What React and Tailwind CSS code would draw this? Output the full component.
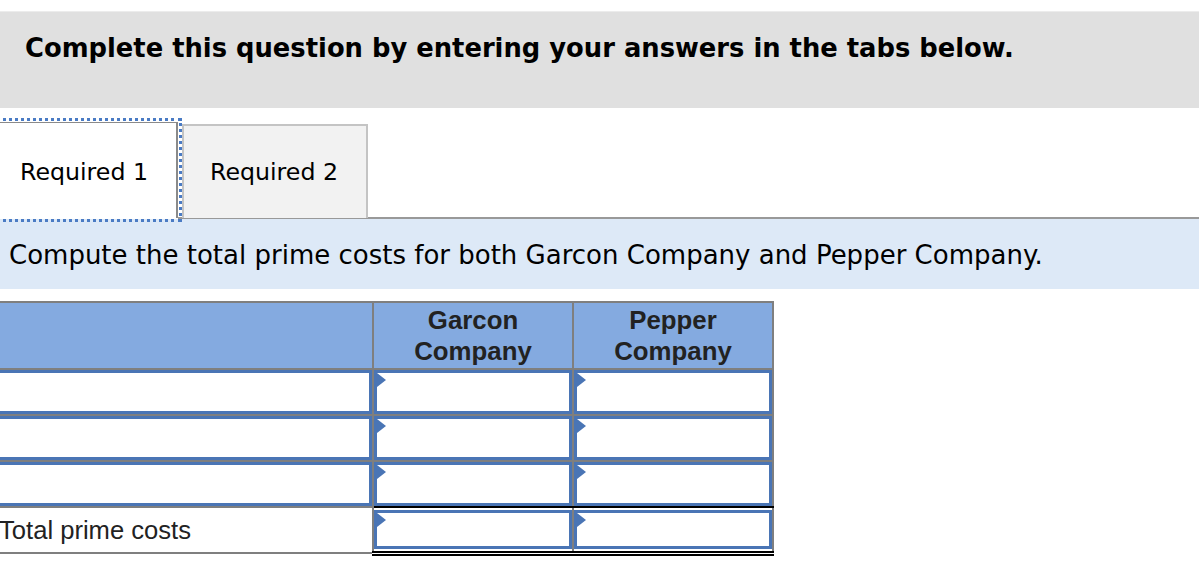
import React from "react";

const verdana = { fontFamily: '"DejaVu Sans", Verdana, sans-serif' };
const arial = { fontFamily: '"Liberation Sans", Arial, sans-serif' };

function Flag() {
  return (
    <span className="absolute left-0 top-0 h-0 w-0 border-y-[7px] border-l-[9px] border-y-transparent border-l-[#4a75b5]" />
  );
}

function InputCell({ flag = true, h = "h-[44px]" }) {
  return (
    <div className={`relative ${h} border-[3px] border-[#4a75b5] bg-white`}>
      {flag && <Flag />}
    </div>
  );
}

export default function App() {
  return (
    <div className="h-[568px] w-[1199px] overflow-hidden bg-white">
      <div className="mt-[11px] h-[97px] border-t border-[#ececec] bg-[#e0e0e0] pl-[25px] pt-[17px]">
        <div className="whitespace-nowrap text-[25.8px] font-bold text-black" style={verdana}>
          Complete this question by entering your answers in the tabs below.
        </div>
      </div>

      <div className="mt-[14px] flex h-[96px] items-end">
        <div
          className="relative flex h-[96px] w-[178px] items-center whitespace-nowrap border-r-2 border-t border-[#8a8a8a] bg-white pl-[20px] pt-[4px] text-[23.7px] text-black outline-dotted outline-[3px] outline-offset-[1px] outline-[#4a7bc4]"
          style={verdana}
        >
          Required 1
        </div>
        <div
          className="ml-[4px] flex h-[94px] w-[186px] items-center whitespace-nowrap border-2 border-b-0 border-[#c4c4c4] bg-[#f2f2f2] pl-[26px] pt-[2px] text-[23.7px] text-black"
          style={verdana}
        >
          Required 2
        </div>
        <div className="flex-1 self-end" />
      </div>

      <div className="-mt-[1px] ml-[178px] h-[2px] bg-[#999999]" />

      <div
        className="flex h-[70px] items-center whitespace-nowrap bg-[#dde9f7] pl-[9px] pt-[2px] text-[26px] text-black"
        style={verdana}
      >
        Compute the total prime costs for both Garcon Company and Pepper Company.
      </div>

      <table className="ml-[-9px] mt-[12px] border-collapse" style={arial}>
        <tbody>
          <tr className="bg-[#84aae0]">
            <td className="h-[67px] w-[381px] border-2 border-[#7f7f7f] p-0" />
            <td className="w-[200px] border-2 border-[#7f7f7f] p-0 text-center text-[25.8px] font-bold leading-[31px] text-[#222222]">
              Garcon
              <br />
              Company
            </td>
            <td className="w-[200px] border-2 border-[#7f7f7f] p-0 text-center text-[25.8px] font-bold leading-[31px] text-[#222222]">
              Pepper
              <br />
              Company
            </td>
          </tr>
          {[0, 1, 2].map((i) => (
            <tr key={i}>
              <td className="border-2 border-[#7f7f7f] p-0">
                <InputCell flag={false} />
              </td>
              <td className={`border-2 border-[#7f7f7f] p-0 ${i === 2 ? "border-b-black" : ""}`}>
                <InputCell />
              </td>
              <td className={`border-2 border-[#7f7f7f] p-0 ${i === 2 ? "border-b-black" : ""}`}>
                <InputCell />
              </td>
            </tr>
          ))}
          <tr>
            <td className="h-[46px] whitespace-nowrap border-2 border-[#7f7f7f] p-0 pl-[6px] text-[25.6px] text-[#222222]">
              Total prime costs
            </td>
            <td className="border-2 border-b-[5px] border-[#7f7f7f] border-t-black border-b-black border-double p-0 [border-top-style:solid] [border-left-style:solid] [border-right-style:solid]">
              <InputCell h="h-[39px]" />
            </td>
            <td className="border-2 border-b-[5px] border-[#7f7f7f] border-t-black border-b-black border-double p-0 [border-top-style:solid] [border-left-style:solid] [border-right-style:solid]">
              <InputCell h="h-[39px]" />
            </td>
          </tr>
        </tbody>
      </table>
    </div>
  );
}
